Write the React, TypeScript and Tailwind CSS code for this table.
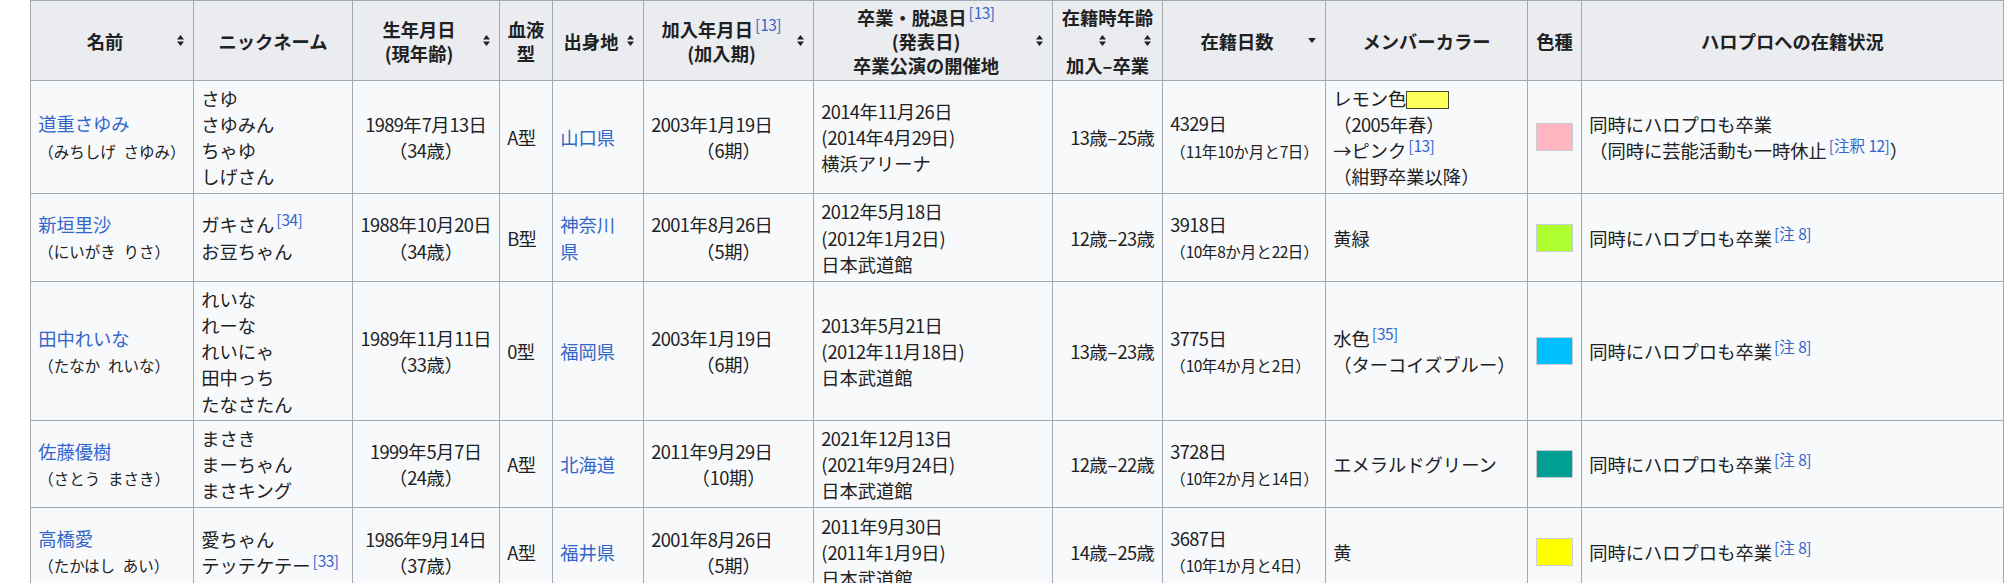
import React from "react";

const LINK = "text-[#3366cc]";

function fx(s: string): React.ReactNode {
  const parts = s.split(/([0-9A-Za-z]+)/);
  return parts.map((p, i) =>
    /^[0-9A-Za-z]+$/.test(p) ? (
      <span key={i} className="tracking-[-0.6px]">
        {p}
      </span>
    ) : (
      <React.Fragment key={i}>{p}</React.Fragment>
    )
  );
}

function SortBoth() {
  return (
    <svg width="7" height="11" viewBox="0 0 7 11" className="block">
      <path d="M0 4.6 L3.5 0 L7 4.6 Z M0 6.4 L3.5 11 L7 6.4 Z" fill="#202122" />
    </svg>
  );
}

function SortDown() {
  return (
    <svg width="8" height="5" viewBox="0 0 8 5" className="block">
      <path d="M0 0 L8 0 L4 5 Z" fill="#202122" />
    </svg>
  );
}

function Sup({ children }: { children: string }) {
  return (
    <span className={`${LINK} ml-[2px] text-[15.5px] font-normal leading-none align-[6px]`}>{fx(children)}</span>
  );
}

function Th({
  children,
  sort,
  className = "",
}: {
  children: React.ReactNode;
  sort?: "both" | "down";
  className?: string;
}) {
  return (
    <th
      className={`border border-[#a2a9b1] bg-[#eaecf0] px-[7px] py-[3.6px] font-bold leading-[24px] align-middle ${className}`}
    >
      {sort ? (
        <div className="flex items-center">
          <div className="flex-1 text-center">{children}</div>
          <div className="ml-[2px] flex w-[12px] justify-center">
            {sort === "both" ? <SortBoth /> : <SortDown />}
          </div>
        </div>
      ) : (
        <div className="text-center">{children}</div>
      )}
    </th>
  );
}

function Td({ children, className = "" }: { children: React.ReactNode; className?: string }) {
  return (
    <td
      className={`border border-[#a2a9b1] px-[7.2px] py-[3.6px] leading-[26.2px] align-middle whitespace-nowrap ${className}`}
    >
      {children}
    </td>
  );
}

function Small({ children }: { children: string }) {
  return <span className="text-[15.5px]">{fx(children)}</span>;
}

function Swatch({ color }: { color: string }) {
  return (
    <div className="flex justify-center">
      <span className="block h-[28px] w-[37px] border border-[#c8ccd1]" style={{ backgroundColor: color }} />
    </div>
  );
}

type Row = {
  h: string;
  name: string;
  reading: string;
  nick: React.ReactNode[];
  birth: string;
  age: string;
  blood: string;
  place: React.ReactNode;
  join: string;
  gen: string;
  grad: string[];
  span: string;
  days: string;
  daysSub: string;
  color: React.ReactNode[];
  swatch: string;
  status: React.ReactNode[];
};

const note8 = (
  <>
    同時にハロプロも卒業<Sup>[注 8]</Sup>
  </>
);

const SP = "\u2002";

const rows: Row[] = [
  {
    h: "h-[113px]",
    name: "道重さゆみ",
    reading: `（みちしげ${SP}さゆみ）`,
    nick: ["さゆ", "さゆみん", "ちゃゆ", "しげさん"],
    birth: "1989年7月13日",
    age: "（34歳）",
    blood: "A型",
    place: "山口県",
    join: "2003年1月19日",
    gen: "（6期）",
    grad: ["2014年11月26日", "(2014年4月29日)", "横浜アリーナ"],
    span: "13歳–25歳",
    days: "4329日",
    daysSub: "（11年10か月と7日）",
    color: [
      <>
        レモン色
        <span className="inline-block h-[18px] w-[43px] border border-[#4a4a2a] bg-[#ffff5c] align-[-3px]" />
      </>,
      fx("（2005年春）"),
      <>
        →ピンク<Sup>[13]</Sup>
      </>,
      "（紺野卒業以降）",
    ],
    swatch: "#ffb6c1",
    status: [
      "同時にハロプロも卒業",
      <>
        （同時に芸能活動も一時休止<Sup>[注釈 12]</Sup>）
      </>,
    ],
  },
  {
    h: "h-[88px]",
    name: "新垣里沙",
    reading: `（にいがき${SP}りさ）`,
    nick: [
      <>
        ガキさん<Sup>[34]</Sup>
      </>,
      "お豆ちゃん",
    ],
    birth: "1988年10月20日",
    age: "（34歳）",
    blood: "B型",
    place: (
      <>
        神奈川
        <br />県
      </>
    ),
    join: "2001年8月26日",
    gen: "（5期）",
    grad: ["2012年5月18日", "(2012年1月2日)", "日本武道館"],
    span: "12歳–23歳",
    days: "3918日",
    daysSub: "（10年8か月と22日）",
    color: ["黄緑"],
    swatch: "#adff2f",
    status: [note8],
  },
  {
    h: "h-[139px]",
    name: "田中れいな",
    reading: `（たなか${SP}れいな）`,
    nick: ["れいな", "れーな", "れいにゃ", "田中っち", "たなさたん"],
    birth: "1989年11月11日",
    age: "（33歳）",
    blood: "0型",
    place: "福岡県",
    join: "2003年1月19日",
    gen: "（6期）",
    grad: ["2013年5月21日", "(2012年11月18日)", "日本武道館"],
    span: "13歳–23歳",
    days: "3775日",
    daysSub: "（10年4か月と2日）",
    color: [
      <>
        水色<Sup>[35]</Sup>
      </>,
      "（ターコイズブルー）",
    ],
    swatch: "#00bfff",
    status: [note8],
  },
  {
    h: "h-[87px]",
    name: "佐藤優樹",
    reading: `（さとう${SP}まさき）`,
    nick: ["まさき", "まーちゃん", "まさキング"],
    birth: "1999年5月7日",
    age: "（24歳）",
    blood: "A型",
    place: "北海道",
    join: "2011年9月29日",
    gen: "（10期）",
    grad: ["2021年12月13日", "(2021年9月24日)", "日本武道館"],
    span: "12歳–22歳",
    days: "3728日",
    daysSub: "（10年2か月と14日）",
    color: ["エメラルドグリーン"],
    swatch: "#009e94",
    status: [note8],
  },
  {
    h: "h-[88px]",
    name: "高橋愛",
    reading: `（たかはし${SP}あい）`,
    nick: [
      "愛ちゃん",
      <>
        テッテケテー<Sup>[33]</Sup>
      </>,
    ],
    birth: "1986年9月14日",
    age: "（37歳）",
    blood: "A型",
    place: "福井県",
    join: "2001年8月26日",
    gen: "（5期）",
    grad: ["2011年9月30日", "(2011年1月9日)", "日本武道館"],
    span: "14歳–25歳",
    days: "3687日",
    daysSub: "（10年1か月と4日）",
    color: ["黄"],
    swatch: "#ffff00",
    status: [note8],
  },
];

export default function App() {
  return (
    <div className="min-h-screen overflow-hidden bg-white pl-[30px] font-['Noto_Sans_CJK_JP','Noto_Sans',sans-serif] text-[18.3px] text-[#202122]">
      <table className="w-[1973px] table-fixed border-collapse bg-[#f8f9fa]">
        <colgroup>
          <col className="w-[163px]" />
          <col className="w-[159px]" />
          <col className="w-[147px]" />
          <col className="w-[53px]" />
          <col className="w-[91px]" />
          <col className="w-[170px]" />
          <col className="w-[239px]" />
          <col className="w-[110px]" />
          <col className="w-[163px]" />
          <col className="w-[202px]" />
          <col className="w-[54px]" />
          <col className="w-[422px]" />
        </colgroup>
        <thead>
          <tr className="h-[80px]">
            <Th sort="both">名前</Th>
            <Th>ニックネーム</Th>
            <Th sort="both">
              生年月日
              <br />
              (現年齢)
            </Th>
            <Th>
              血液
              <br />型
            </Th>
            <Th sort="both">出身地</Th>
            <Th sort="both">
              加入年月日<Sup>[13]</Sup>
              <br />
              (加入期)
            </Th>
            <Th sort="both">
              卒業・脱退日<Sup>[13]</Sup>
              <br />
              (発表日)
              <br />
              卒業公演の開催地
            </Th>
            <th className="border border-[#a2a9b1] bg-[#eaecf0] px-[7px] py-[3.6px] font-bold leading-[24px] align-middle">
              <div className="text-center whitespace-nowrap">在籍時年齢</div>
              <div className="flex h-[24px] items-center gap-[38px] pl-[39px]">
                <SortBoth />
                <SortBoth />
              </div>
              <div className="text-center whitespace-nowrap">加入–卒業</div>
            </th>
            <Th sort="down">在籍日数</Th>
            <Th>メンバーカラー</Th>
            <Th>色種</Th>
            <Th>ハロプロへの在籍状況</Th>
          </tr>
        </thead>
        <tbody>
          {rows.map((r) => (
            <tr key={r.name} className={r.h}>
              <Td>
                <div className={LINK}>{r.name}</div>
                <div>
                  <Small>{r.reading}</Small>
                </div>
              </Td>
              <Td>
                {r.nick.map((n, i) => (
                  <div key={i}>{n}</div>
                ))}
              </Td>
              <Td className="text-center">
                <div>{fx(r.birth)}</div>
                <div>{fx(r.age)}</div>
              </Td>
              <Td>{fx(r.blood)}</Td>
              <Td>
                <span className={LINK}>{r.place}</span>
              </Td>
              <Td>
                <div>{fx(r.join)}</div>
                <div className="text-center">{fx(r.gen)}</div>
              </Td>
              <Td>
                {r.grad.map((g, i) => (
                  <div key={i}>{fx(g)}</div>
                ))}
              </Td>
              <Td className="text-right">{fx(r.span)}</Td>
              <Td>
                <div>{fx(r.days)}</div>
                <div>
                  <Small>{r.daysSub}</Small>
                </div>
              </Td>
              <Td>
                {r.color.map((c, i) => (
                  <div key={i}>{c}</div>
                ))}
              </Td>
              <Td>
                <Swatch color={r.swatch} />
              </Td>
              <Td>
                {r.status.map((s, i) => (
                  <div key={i}>{s}</div>
                ))}
              </Td>
            </tr>
          ))}
        </tbody>
      </table>
    </div>
  );
}
